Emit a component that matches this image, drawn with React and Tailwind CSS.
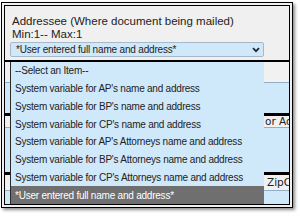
import React from 'react';

const items = [
  '--Select an Item--',
  "System variable for AP's name and address",
  "System variable for BP's name and address",
  "System variable for CP's name and address",
  "System variable for AP's Attorneys name and address",
  "System variable for BP's Attorneys name and address",
  "System variable for CP's Attorneys name and address",
  '*User entered full name and address*',
];

const Chevron = () => (
  <svg width="8" height="6" viewBox="0 0 8 6" className="shrink-0">
    <path d="M1 1.2 L4 4.2 L7 1.2" fill="none" stroke="#1f2a36" strokeWidth="1.8" />
  </svg>
);

const App = () => {
  return (
    <div className="w-[300px] h-[217px] bg-white pt-[2px] pl-[1px] font-['Liberation_Sans',Arial,sans-serif]">
      <div className="relative w-[292px] h-[206px] border-4 border-double border-black bg-[#f0f0f0] shadow-[2px_2px_3px_rgba(0,0,0,0.45)] pl-[5px] pt-[9px] overflow-hidden">
        <p className="ml-[2px] text-[11.5px] leading-[13px] text-[#222] whitespace-nowrap">
          Addressee (Where document being mailed)
        </p>
        <p className="ml-[2px] text-[11.5px] leading-[13px] text-[#222]">Min:1-- Max:1</p>

        <div className="mt-[1px] w-[254px] h-[15px] flex items-center justify-between pl-[5px] pr-[3px] bg-[#cfe9fb] border border-[#a7b9c8] rounded-[2px]">
          <span className="text-[10px] leading-none tracking-[-0.18px] text-[#222] whitespace-nowrap">
            *User entered full name and address*
          </span>
          <Chevron />
        </div>

        {/* form underneath the open list */}
        <div className="-ml-[5px] mt-[3px] w-[284px] overflow-hidden">
          <div className="h-[2px] bg-black" />
          <div className="h-[21px] bg-[#f1f1f1] border-b border-[#8fb0c8]" />
          <div className="h-[30px] bg-[#cfe9fb]" />
          <div className="h-[3px] bg-black" />
          <div className="h-[12px] flex bg-[#f1f1f1] border-b border-[#8fb0c8] overflow-hidden">
            <div className="w-[260px] shrink-0" />
            <span className="text-[10.5px] leading-[11px] text-[#222] whitespace-nowrap font-['DejaVu_Sans',sans-serif]">
              or Address
            </span>
          </div>
          <div className="h-[44px] bg-[#cfe9fb]" />
          <div className="h-[3px] bg-black" />
          <div className="h-[16px] flex items-center bg-[#f1f1f1] border-b border-[#8fb0c8] overflow-hidden">
            <div className="w-[262px] shrink-0" />
            <span className="text-[10.5px] leading-none text-[#222] whitespace-nowrap font-['DejaVu_Sans',sans-serif]">
              ZipCode
            </span>
          </div>
          <div className="h-[13px] bg-[#cfe9fb]" />
        </div>

        {/* open dropdown list */}
        <ul className="absolute left-[5px] top-[56px] w-[254px] bg-[#cfe9fb] border-l border-[#2a2a2a]">
          {items.map((item, i) => {
            const selected = i === items.length - 1;
            return (
              <li
                key={item}
                className={
                  'h-[17.75px] flex items-center pl-[4px] text-[10px] tracking-[-0.22px] whitespace-nowrap ' +
                  (selected ? 'bg-[#6f6f6f] text-white' : 'text-[#222]')
                }
              >
                {item}
              </li>
            );
          })}
        </ul>
      </div>
    </div>
  );
};

export default App;
